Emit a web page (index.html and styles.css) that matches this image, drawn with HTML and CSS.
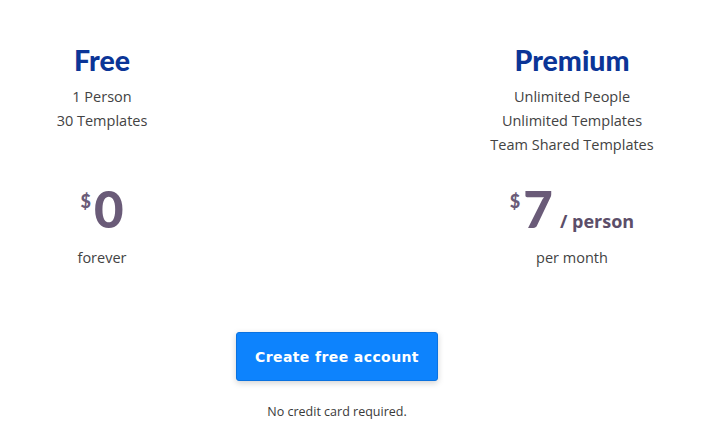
FILE: index.html
```html
<!DOCTYPE html>
<html>
<head>
<meta charset="utf-8">
<link rel="stylesheet" href="styles.css">
</head>
<body>
<div class="pricing">
  <div class="plans">
    <div class="plan">
      <h2 class="plan-title">Free</h2>
      <ul class="features">
        <li>1 Person</li>
        <li>30 Templates</li>
      </ul>
      <div class="price"><span class="cur">$</span><span class="amount">0</span></div>
      <div class="period">forever</div>
    </div>
    <div class="spacer"></div>
    <div class="plan">
      <h2 class="plan-title">Premium</h2>
      <ul class="features">
        <li>Unlimited People</li>
        <li>Unlimited Templates</li>
        <li>Team Shared Templates</li>
      </ul>
      <div class="price"><span class="cur">$</span><span class="amount">7</span><span class="unit">/ person</span></div>
      <div class="period">per month</div>
    </div>
  </div>
  <div class="cta">
    <button class="btn">Create free account</button>
    <p class="note">No credit card required.</p>
  </div>
</div>
</body>
</html>
```
FILE: styles.css
```css
* { box-sizing: border-box; }
html, body { margin: 0; padding: 0; background: #fff; }
body { font-family: "Open Sans", "Noto Sans", sans-serif; color: #434343; }
.pricing { width: 674px; padding-top: 42px; }
.plans { display: grid; grid-template-columns: 204px 266px 204px; }
.plan { display: flex; flex-direction: column; align-items: center; text-align: center; }
.plan-title { margin: 0; font-family: Lato, sans-serif; font-weight: 900; font-size: 28.5px; line-height: 36px; color: #0b3597; }
.features { list-style: none; margin: 7px 0 0; padding: 0; font-size: 14.5px; line-height: 24px; }
.price { margin-top: 28px; display: flex; align-items: baseline; height: 48px; color: #6a5b78; font-family: Lato, sans-serif; font-weight: 900; }
.plan:first-child .price { margin-top: 52px; }
.cur { align-self: flex-start; font-size: 18px; line-height: 20px; margin-top: 6px; margin-right: 3px; }
.amount { font-size: 51px; line-height: 48px; }
.unit { font-family: "Open Sans", sans-serif; font-weight: 700; font-size: 18px; margin-left: 7px; color: #5c4e69; }
.period { margin-top: 15px; font-size: 14.5px; line-height: 20px; }
.cta { display: flex; flex-direction: column; align-items: center; margin-top: 64px; }
.btn { width: 202px; height: 49px; border: 1px solid #0a72e0; border-radius: 3px; background: #0d83fd; color: #fff; font-family: "DejaVu Sans", sans-serif; font-weight: bold; font-size: 14px; letter-spacing: 0.4px; box-shadow: 0 2px 6px rgba(0,0,0,0.18); padding: 0; }
.note { margin: 22px 0 0; font-size: 12.5px; color: #3a3a3a; }
```
